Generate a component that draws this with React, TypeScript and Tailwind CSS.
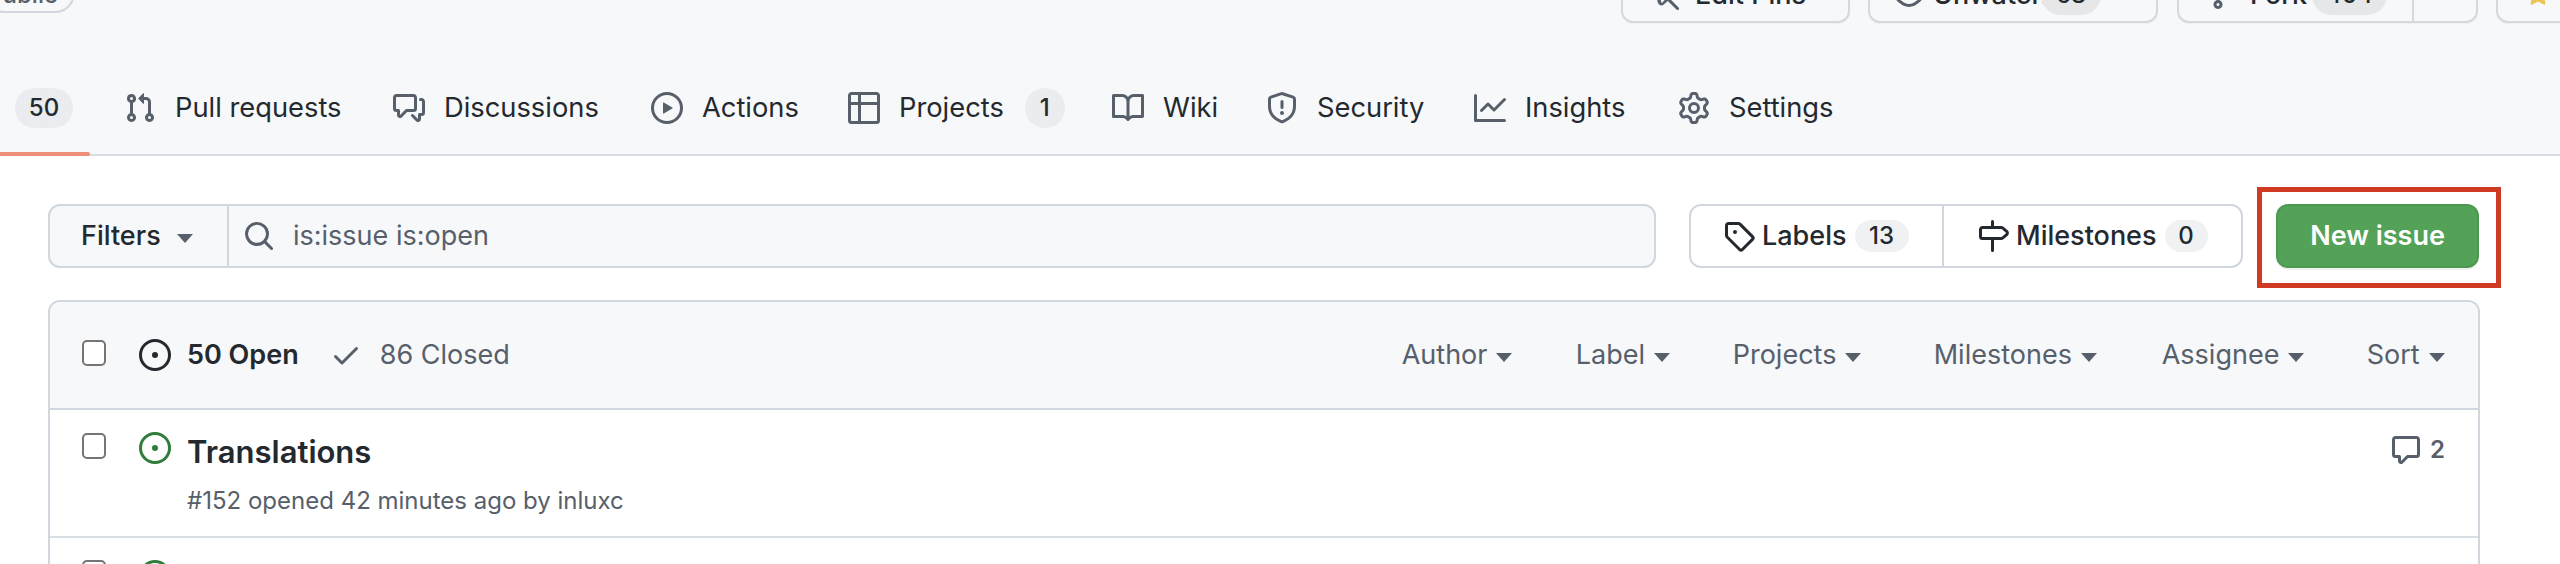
const paths = {
  pull: "M1.5 3.25a2.25 2.25 0 1 1 3 2.122v5.256a2.251 2.251 0 1 1-1.5 0V5.372A2.25 2.25 0 0 1 1.5 3.25Zm5.677-.177L9.573.677A.25.25 0 0 1 10 .854V2.5h1A2.5 2.5 0 0 1 13.5 5v5.628a2.251 2.251 0 1 1-1.5 0V5a1 1 0 0 0-1-1h-1v1.646a.25.25 0 0 1-.427.177L7.177 3.427a.25.25 0 0 1 0-.354ZM3.75 2.5a.75.75 0 1 0 0 1.5.75.75 0 0 0 0-1.5Zm0 9.5a.75.75 0 1 0 0 1.5.75.75 0 0 0 0-1.5Zm8.25.75a.75.75 0 1 0 1.5 0 .75.75 0 0 0-1.5 0Z",
  discussion: "M1.75 1h8.5c.966 0 1.75.784 1.75 1.75v5.5A1.75 1.75 0 0 1 10.25 10H7.061l-2.574 2.573A1.458 1.458 0 0 1 2 11.543V10h-.25A1.75 1.75 0 0 1 0 8.25v-5.5C0 1.784.784 1 1.75 1ZM1.5 2.75v5.5c0 .138.112.25.25.25h1a.75.75 0 0 1 .75.75v2.19l2.72-2.72a.749.749 0 0 1 .53-.22h3.5a.25.25 0 0 0 .25-.25v-5.5a.25.25 0 0 0-.25-.25h-8.5a.25.25 0 0 0-.25.25Zm13 2a.25.25 0 0 0-.25-.25h-.5a.75.75 0 0 1 0-1.5h.5c.966 0 1.75.784 1.75 1.75v5.5A1.75 1.75 0 0 1 14.25 12H14v1.543a1.458 1.458 0 0 1-2.487 1.03L9.22 12.28a.749.749 0 0 1 .326-1.275.749.749 0 0 1 .734.215l2.22 2.22v-2.19a.75.75 0 0 1 .75-.75h1a.25.25 0 0 0 .25-.25Z",
  play: "M8 0a8 8 0 1 1 0 16A8 8 0 0 1 8 0ZM1.5 8a6.5 6.5 0 1 0 13 0 6.5 6.5 0 0 0-13 0Zm4.879-2.773 4.264 2.559a.25.25 0 0 1 0 .428l-4.264 2.559A.25.25 0 0 1 6 10.559V5.442a.25.25 0 0 1 .379-.215Z",
  table: "M0 1.75C0 .784.784 0 1.75 0h12.5C15.216 0 16 .784 16 1.75v12.5A1.75 1.75 0 0 1 14.25 16H1.75A1.75 1.75 0 0 1 0 14.25ZM6.5 6.5v8h7.75a.25.25 0 0 0 .25-.25V6.5Zm8-1.5V1.75a.25.25 0 0 0-.25-.25H6.5V5Zm-13 1.5v7.75c0 .138.112.25.25.25H5v-8ZM5 5V1.5H1.75a.25.25 0 0 0-.25.25V5Z",
  book: "M0 1.75A.75.75 0 0 1 .75 1h4.253c1.227 0 2.317.59 3 1.501A3.743 3.743 0 0 1 11.006 1h4.245a.75.75 0 0 1 .75.75v10.5a.75.75 0 0 1-.75.75h-4.507a2.25 2.25 0 0 0-1.591.659l-.622.621a.75.75 0 0 1-1.06 0l-.622-.621A2.25 2.25 0 0 0 5.258 13H.75a.75.75 0 0 1-.75-.75Zm7.251 10.324.004-5.073-.002-2.253A2.25 2.25 0 0 0 5.003 2.5H1.5v9h3.757a3.75 3.75 0 0 1 1.994.574ZM8.755 4.75l-.004 7.322a3.752 3.752 0 0 1 1.992-.572H14.5v-9h-3.495a2.25 2.25 0 0 0-2.25 2.25Z",
  shield: "M7.467.133a1.748 1.748 0 0 1 1.066 0l5.25 1.68A1.75 1.75 0 0 1 15 3.48V7c0 1.566-.32 3.182-1.303 4.682-.983 1.498-2.585 2.813-5.032 3.855a1.697 1.697 0 0 1-1.33 0c-2.447-1.042-4.049-2.357-5.032-3.855C1.32 10.182 1 8.566 1 7V3.48a1.75 1.75 0 0 1 1.217-1.667Zm.61 1.429a.25.25 0 0 0-.153 0l-5.25 1.68a.25.25 0 0 0-.174.238V7c0 1.358.275 2.666 1.057 3.86.784 1.194 2.121 2.34 4.366 3.297a.196.196 0 0 0 .154 0c2.245-.956 3.582-2.104 4.366-3.298C13.225 9.666 13.5 8.36 13.5 7V3.48a.251.251 0 0 0-.174-.237l-5.25-1.68ZM8.75 4.75v3a.75.75 0 0 1-1.5 0v-3a.75.75 0 0 1 1.5 0ZM9 10.5a1 1 0 1 1-2 0 1 1 0 0 1 2 0Z",
  graph: "M1.5 1.75V13.5h13.75a.75.75 0 0 1 0 1.5H.75a.75.75 0 0 1-.75-.75V1.75a.75.75 0 0 1 1.5 0Zm14.28 2.53-5.25 5.25a.75.75 0 0 1-1.06 0L7 7.06 4.28 9.78a.751.751 0 0 1-1.042-.018.751.751 0 0 1-.018-1.042l3.25-3.25a.75.75 0 0 1 1.06 0L10 7.94l4.72-4.72a.751.751 0 0 1 1.042.018.751.751 0 0 1 .018 1.042Z",
  gear: "M8 0a8.2 8.2 0 0 1 .701.031C9.444.095 9.99.645 10.16 1.29l.288 1.107c.018.066.079.158.212.224.231.114.454.243.668.386.123.082.233.09.299.071l1.103-.303c.644-.176 1.392.021 1.82.63.27.385.506.792.704 1.218.315.675.111 1.422-.364 1.891l-.814.806c-.049.048-.098.147-.088.294.016.257.016.515 0 .772-.01.147.038.246.088.294l.814.806c.475.469.679 1.216.364 1.891a7.977 7.977 0 0 1-.704 1.217c-.428.61-1.176.807-1.82.63l-1.102-.302c-.067-.019-.177-.011-.3.071a5.909 5.909 0 0 1-.668.386c-.133.066-.194.158-.211.224l-.29 1.106c-.168.646-.715 1.196-1.458 1.26a8.006 8.006 0 0 1-1.402 0c-.743-.064-1.289-.614-1.458-1.26l-.289-1.106c-.018-.066-.079-.158-.212-.224a5.738 5.738 0 0 1-.668-.386c-.123-.082-.233-.09-.299-.071l-1.103.303c-.644.176-1.392-.021-1.82-.63a8.12 8.12 0 0 1-.704-1.218c-.315-.675-.111-1.422.363-1.891l.815-.806c.05-.048.098-.147.088-.294a6.214 6.214 0 0 1 0-.772c.01-.147-.038-.246-.088-.294l-.815-.806C.635 6.045.431 5.298.746 4.623a7.92 7.92 0 0 1 .704-1.217c.428-.61 1.176-.807 1.82-.63l1.102.302c.067.019.177.011.3-.071.214-.143.437-.272.668-.386.133-.066.194-.158.211-.224l.29-1.106C6.009.645 6.556.095 7.299.03 7.53.01 7.764 0 8 0Zm-.571 1.525c-.036.003-.108.036-.137.146l-.289 1.105c-.147.561-.549.967-.998 1.189-.173.086-.34.183-.5.29-.417.278-.97.423-1.529.27l-1.103-.303c-.109-.03-.175.016-.195.045-.22.312-.412.644-.573.99-.014.031-.021.11.059.19l.815.806c.411.406.562.957.53 1.456a4.709 4.709 0 0 0 0 .582c.032.499-.119 1.05-.53 1.456l-.815.806c-.081.08-.073.159-.059.19.162.346.353.677.573.989.02.03.085.076.195.046l1.102-.303c.56-.153 1.113-.008 1.53.27.161.107.328.204.501.29.447.222.85.629.997 1.189l.289 1.105c.029.109.101.143.137.146a6.6 6.6 0 0 0 1.142 0c.036-.003.108-.036.137-.146l.289-1.105c.147-.561.549-.967.998-1.189.173-.086.34-.183.5-.29.417-.278.97-.423 1.529-.27l1.103.303c.109.029.175-.016.195-.045.22-.313.411-.644.573-.99.014-.031.021-.11-.059-.19l-.815-.806c-.411-.406-.562-.957-.53-1.456a4.709 4.709 0 0 0 0-.582c-.032-.499.119-1.05.53-1.456l.815-.806c.081-.08.073-.159.059-.19a6.464 6.464 0 0 0-.573-.989c-.02-.03-.085-.076-.195-.046l-1.102.303c-.56.153-1.113.008-1.53-.27a4.44 4.44 0 0 0-.501-.29c-.447-.222-.85-.629-.997-1.189l-.289-1.105c-.029-.11-.101-.143-.137-.146a6.6 6.6 0 0 0-1.142 0ZM11 8a3 3 0 1 1-6 0 3 3 0 0 1 6 0ZM9.5 8a1.5 1.5 0 1 0-3.001.001A1.5 1.5 0 0 0 9.5 8Z",
  search: "M10.68 11.74a6 6 0 0 1-7.922-8.982 6 6 0 0 1 8.982 7.922l3.04 3.04a.749.749 0 0 1-.326 1.275.749.749 0 0 1-.734-.215ZM11.5 7a4.499 4.499 0 1 0-8.997 0A4.499 4.499 0 0 0 11.5 7Z",
  tag: "M1 7.775V2.75C1 1.784 1.784 1 2.75 1h5.025c.464 0 .91.184 1.238.513l6.25 6.25a1.75 1.75 0 0 1 0 2.474l-5.026 5.026a1.75 1.75 0 0 1-2.474 0l-6.25-6.25A1.75 1.75 0 0 1 1 7.775Zm1.5 0c0 .066.026.13.073.177l6.25 6.25a.25.25 0 0 0 .354 0l5.025-5.025a.25.25 0 0 0 0-.354l-6.25-6.25a.25.25 0 0 0-.177-.073H2.75a.25.25 0 0 0-.25.25ZM6 5a1 1 0 1 1 0 2 1 1 0 0 1 0-2Z",
  milestone: "M7.75 0a.75.75 0 0 1 .75.75V3h3.634c.414 0 .814.147 1.13.414l2.07 1.75a1.75 1.75 0 0 1 0 2.672l-2.07 1.75a1.75 1.75 0 0 1-1.13.414H8.5v5.25a.75.75 0 0 1-1.5 0V10H2.75A1.75 1.75 0 0 1 1 8.25v-3.5C1 3.784 1.784 3 2.75 3H7V.75A.75.75 0 0 1 7.75 0Zm4.384 8.5a.25.25 0 0 0 .161-.06l2.07-1.75a.248.248 0 0 0 0-.38l-2.07-1.75a.25.25 0 0 0-.161-.06H2.75a.25.25 0 0 0-.25.25v3.5c0 .138.112.25.25.25h9.384Z",
  issue: "M8 9.5a1.5 1.5 0 1 0 0-3 1.5 1.5 0 0 0 0 3ZM8 0a8 8 0 1 1 0 16A8 8 0 0 1 8 0ZM1.5 8a6.5 6.5 0 1 0 13 0 6.5 6.5 0 0 0-13 0Z",
  check: "M13.78 4.22a.75.75 0 0 1 0 1.06l-7.25 7.25a.75.75 0 0 1-1.06 0L2.22 9.28a.751.751 0 0 1 .018-1.042.751.751 0 0 1 1.042-.018L6 10.94l6.72-6.72a.75.75 0 0 1 1.06 0Z",
  comment: "M1 2.75C1 1.784 1.784 1 2.75 1h10.5c.966 0 1.75.784 1.75 1.75v7.5A1.75 1.75 0 0 1 13.25 12H9.06l-2.573 2.573A1.458 1.458 0 0 1 4 13.543V12H2.75A1.75 1.75 0 0 1 1 10.25Zm1.75-.25a.25.25 0 0 0-.25.25v7.5c0 .138.112.25.25.25h2a.75.75 0 0 1 .75.75v2.19l2.72-2.72a.749.749 0 0 1 .53-.22h4.5a.25.25 0 0 0 .25-.25v-7.5a.25.25 0 0 0-.25-.25Z",
  eye: "M8 2c1.981 0 3.671.992 4.933 2.078 1.27 1.091 2.187 2.345 2.637 3.023a1.62 1.62 0 0 1 0 1.798c-.45.678-1.367 1.932-2.637 3.023C11.67 13.008 9.981 14 8 14c-1.981 0-3.671-.992-4.933-2.078C1.797 10.83.88 9.576.43 8.898a1.62 1.62 0 0 1 0-1.798c.45-.677 1.367-1.931 2.637-3.022C4.33 2.992 6.019 2 8 2ZM1.679 7.932a.12.12 0 0 0 0 .136c.411.622 1.241 1.75 2.366 2.717C5.176 11.758 6.527 12.5 8 12.5c1.473 0 2.825-.742 3.955-1.715 1.124-.967 1.954-2.096 2.366-2.717a.12.12 0 0 0 0-.136c-.412-.621-1.242-1.75-2.366-2.717C10.824 4.242 9.473 3.5 8 3.5c-1.473 0-2.825.742-3.955 1.715-1.124.967-1.954 2.096-2.366 2.717ZM8 10a2 2 0 1 1-.001-3.999A2 2 0 0 1 8 10Z",
  fork: "M5 5.372v.878c0 .414.336.75.75.75h4.5a.75.75 0 0 0 .75-.75v-.878a2.25 2.25 0 1 1 1.5 0v.878a2.25 2.25 0 0 1-2.25 2.25h-1.5v2.128a2.251 2.251 0 1 1-1.5 0V8.5h-1.5A2.25 2.25 0 0 1 3.5 6.25v-.878a2.25 2.25 0 1 1 1.5 0ZM5 3.25a.75.75 0 1 0-1.5 0 .75.75 0 0 0 1.5 0Zm6.75.75a.75.75 0 1 0 0-1.5.75.75 0 0 0 0 1.5Zm-3 8.75a.75.75 0 1 0-1.5 0 .75.75 0 0 0 1.5 0Z",
  star: "M8 .25a.75.75 0 0 1 .673.418l1.882 3.815 4.21.612a.75.75 0 0 1 .416 1.279l-3.046 2.97.719 4.192a.751.751 0 0 1-1.088.791L8 12.347l-3.766 1.98a.75.75 0 0 1-1.088-.79l.72-4.194L.818 6.374a.75.75 0 0 1 .416-1.28l4.21-.611L7.327.668A.75.75 0 0 1 8 .25Z",
  pin: "M4.706.984.984 4.706a1.75 1.75 0 0 0 .504 2.826l1.327.613a3.089 3.089 0 0 1 1.707 2.084l.42 1.68a1.75 1.75 0 0 0 2.924.806L9.91 10.97l4.31 4.31a.749.749 0 0 0 1.275-.326.749.749 0 0 0-.215-.734l-4.31-4.31 1.745-1.745a1.75 1.75 0 0 0-.806-2.924l-1.68-.42A3.089 3.089 0 0 1 8.145 2.815l-.613-1.327A1.75 1.75 0 0 0 4.706.984Zm1.06 1.06a.25.25 0 0 1 .403.072l.613 1.327a4.59 4.59 0 0 0 3.06 2.537l1.68.42a.25.25 0 0 1 .116.418L7.1 11.86a.25.25 0 0 1-.418-.116l-.42-1.68a4.59 4.59 0 0 0-2.537-3.06l-1.327-.613a.25.25 0 0 1-.072-.403Z",
}

function Octicon({ name, className }: { name: keyof typeof paths; className: string }) {
  return (
    <svg viewBox="0 0 16 16" fill="currentColor" className={`shrink-0 ${className}`} aria-hidden="true">
      <path fillRule="evenodd" d={paths[name]} />
    </svg>
  )
}

function Caret({ className = "" }: { className?: string }) {
  return <span className={`shrink-0 border-x-[8px] border-t-[9px] border-x-transparent ${className}`} />
}

function Tab({ icon, label, width, children }: { icon: keyof typeof paths; label: string; width: string; children?: React.ReactNode }) {
  return (
    <a className={`flex items-center gap-[19px] ${width}`}>
      <Octicon name={icon} className="size-8 text-[#57606a]" />
      <span className="text-[27.3px] text-[#24292f]">{label}</span>
      {children}
    </a>
  )
}

function SortMenu({ label, width }: { label: string; width: string }) {
  return (
    <div className={`flex items-center gap-[9px] ${width}`}>
      <span>{label}</span>
      <Caret className="mt-1 border-t-[#57606a]" />
    </div>
  )
}

function Checkbox() {
  return <span className="block h-[26px] w-6 shrink-0 rounded-[5px] border-2 border-[#757575] bg-white" />
}

export default function App() {
  return (
    <div className="h-[564px] w-[2560px] overflow-hidden bg-white [font-family:Inter,sans-serif]">
      {/* repo header + tabs */}
      <header className="relative flex h-[156px] flex-col border-b-2 border-[#d8dee4] bg-[#f6f8fa]">
        <div className="-mt-[33px] flex h-14 shrink-0 items-start text-[27px] font-medium text-[#24292f]">
          <span className="-ml-[16px] mt-[6px] flex h-10 w-[91px] shrink-0 items-center justify-center rounded-full border-2 border-[#d0d7de] pr-[14px] pt-[3px] text-[24px] text-[#57606a]">
            Public
          </span>
          <button className="ml-[1546px] flex h-14 w-[229px] shrink-0 items-center rounded-[12px] border-2 border-[#d5d8dc] pl-[25px] shadow-[0_1px_0_rgba(31,35,40,0.04)]">
            <Octicon name="pin" className="size-8 text-[#57606a]" />
            <span className="ml-[15px]">Edit Pins</span>
            <Caret className="ml-4 border-t-[#57606a]" />
          </button>
          <button className="ml-[18px] flex h-14 w-[290px] shrink-0 items-center rounded-[12px] border-2 border-[#d5d8dc] pl-[23px] shadow-[0_1px_0_rgba(31,35,40,0.04)]">
            <Octicon name="eye" className="size-8 text-[#57606a]" />
            <span className="ml-2 w-[108px] text-left">Unwatch</span>
            <span className="flex h-10 w-[60px] items-center justify-center rounded-full bg-[#e6e7e9] text-[24px]">68</span>
            <Caret className="ml-[14px] border-t-[#57606a]" />
          </button>
          <div className="ml-[19px] flex h-14 w-[301px] shrink-0 items-center rounded-[12px] border-2 border-[#d5d8dc] pl-[23px] shadow-[0_1px_0_rgba(31,35,40,0.04)]">
            <Octicon name="fork" className="size-8 text-[#57606a]" />
            <span className="ml-4 w-[62px]">Fork</span>
            <span className="flex h-10 w-[75px] items-center justify-center rounded-full bg-[#e6e7e9] text-[24px]">404</span>
            <span className="ml-[25px] h-full w-[2px] bg-[#d5d8dc]" />
            <Caret className="ml-6 border-t-[#57606a]" />
          </div>
          <button className="ml-[18px] flex h-14 w-[100px] shrink-0 items-center rounded-[12px] border-2 border-[#d5d8dc] pl-[28px] shadow-[0_1px_0_rgba(31,35,40,0.04)]">
            <Octicon name="star" className="size-6 text-[#eac54f]" />
          </button>
        </div>

        <nav className="mt-[65px] flex h-10 shrink-0 items-center">
          <a className="flex w-[124px] items-center pl-[15px]">
            <span className="flex h-10 w-[58px] items-center justify-center rounded-full bg-[#eaecef] text-[24px] font-medium text-[#24292f]">50</span>
          </a>
          <Tab icon="pull" label="Pull requests" width="w-[269px]" />
          <Tab icon="discussion" label="Discussions" width="w-[258px]" />
          <Tab icon="play" label="Actions" width="w-[197px]" />
          <Tab icon="table" label="Projects" width="w-[264px]">
            <span className="ml-[2px] flex h-10 w-10 items-center justify-center rounded-full bg-[#eaecef] text-[24px] font-medium text-[#24292f]">1</span>
          </Tab>
          <Tab icon="book" label="Wiki" width="w-[154px]" />
          <Tab icon="shield" label="Security" width="w-[208px]" />
          <Tab icon="graph" label="Insights" width="w-[204px]" />
          <Tab icon="gear" label="Settings" width="w-[200px]" />
        </nav>
        <span className="absolute bottom-[-2px] left-0 h-1 w-[90px] rounded-r-sm bg-[#ef8e78]" />
      </header>

      <main className="px-[48px] pt-[48px]">
        {/* filters row */}
        <div className="flex h-16 items-stretch">
          <div className="flex w-[1608px] shrink-0 rounded-[12px] border-2 border-[#d0d7de] bg-[#f6f8fa]">
            <button className="flex w-[179px] shrink-0 items-center border-r-2 border-[#d0d7de] pl-[31px] text-[27px] font-medium text-[#24292f]">
              Filters
              <Caret className="ml-4 mt-1 border-t-[#57606a]" />
            </button>
            <div className="flex items-center pl-[14px] text-[27px] text-[#57606a]">
              <Octicon name="search" className="size-8" />
              <span className="ml-[18px]">is:issue is:open</span>
            </div>
          </div>
          <div className="ml-[33px] flex w-[554px] shrink-0 rounded-[12px] border-2 border-[#d0d7de] bg-white text-[27px] font-medium text-[#24292f]">
            <a className="flex w-[253px] shrink-0 items-center border-r-2 border-[#d0d7de] pl-[32px]">
              <Octicon name="tag" className="size-8" />
              <span className="ml-[7px]">Labels</span>
              <span className="ml-2 flex h-8 w-[54px] items-center justify-center rounded-full bg-[#eff1f3] text-[24px]">13</span>
            </a>
            <a className="flex items-center pl-[33px]">
              <Octicon name="milestone" className="size-8" />
              <span className="ml-[7px]">Milestones</span>
              <span className="ml-2 flex h-8 w-[43px] items-center justify-center rounded-full bg-[#eff1f3] text-[24px]">0</span>
            </a>
          </div>
          <div className="relative ml-[33px] w-[203px] shrink-0">
            <button className="flex h-16 w-full items-center justify-center rounded-[12px] border-2 border-[#4c9a52] bg-[#54a158] text-[27px] font-semibold text-white shadow-[0_2px_0_rgba(31,35,40,0.06)]">
              New issue
            </button>
            <span className="pointer-events-none absolute -bottom-5 -left-[19px] -right-[22px] -top-[17px] border-[5px] border-[#d03a22]" />
          </div>
        </div>

        {/* issues table */}
        <section className="mt-8 h-[300px] w-[2432px] rounded-t-[12px] border-x-2 border-t-2 border-[#d0d7de]">
          <div className="flex h-[108px] items-center rounded-t-[10px] border-b-2 border-[#d0d7de] bg-[#f6f8fa] pl-[32px] text-[27px] text-[#57606a]">
            <span className="-mt-1"><Checkbox /></span>
            <Octicon name="issue" className="ml-[33px] size-8 text-[#24292f]" />
            <span className="ml-4 font-semibold text-[#24292f]">50 Open</span>
            <Octicon name="check" className="ml-[31px] size-8" />
            <span className="ml-[18px]">86 Closed</span>
            <div className="ml-[892px] flex items-center">
              <SortMenu label="Author" width="w-[174px]" />
              <SortMenu label="Label" width="w-[157px]" />
              <SortMenu label="Projects" width="w-[201px]" />
              <SortMenu label="Milestones" width="w-[228px]" />
              <SortMenu label="Assignee" width="w-[205px]" />
              <SortMenu label="Sort" width="w-[77px]" />
            </div>
          </div>

          <div className="flex h-[128px] border-b-2 border-[#d8dee4] pl-[32px] pt-[22px]">
            <span className="mt-[1px]"><Checkbox /></span>
            <Octicon name="issue" className="ml-[33px] size-8 text-[#2f7d3b]" />
            <div className="ml-4 min-w-0">
              <div className="text-[31px] font-semibold leading-10 text-[#24292f]">Translations</div>
              <div className="mt-[11px] text-[24px] leading-9 text-[#57606a]">#152 opened 42 minutes ago by inluxc</div>
            </div>
            <div className="ml-auto mr-[33px] flex h-8 items-center gap-2 pt-1 text-[#57606a]">
              <Octicon name="comment" className="size-8" />
              <span className="text-[24px] font-semibold">2</span>
            </div>
          </div>

          <div className="flex pl-[32px] pt-[22px]">
            <Checkbox />
            <Octicon name="issue" className="ml-[33px] size-8 text-[#2f7d3b]" />
            <div className="-mt-[3px] ml-4 text-[31px] font-semibold leading-10 text-[#24292f]">Add</div>
          </div>
        </section>
      </main>
    </div>
  )
}
